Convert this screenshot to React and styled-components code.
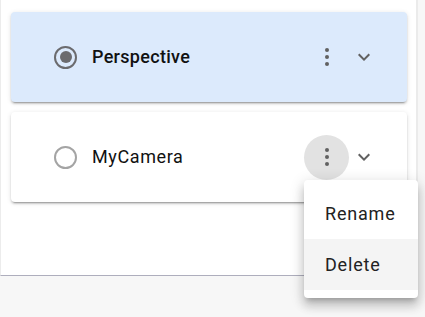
import React from 'react';
import styled, { createGlobalStyle } from 'styled-components';

const GlobalStyle = createGlobalStyle`
  html, body {
    margin: 0;
    padding: 0;
    background: #f7f7f7;
    font-family: Roboto, "Liberation Sans", sans-serif;
  }
`;

const Page = styled.div`
  position: relative;
  min-height: 100vh;
  background: #f7f7f7;
`;

const Panel = styled.div`
  box-sizing: border-box;
  width: 418px;
  height: 276px;
  background: #fff;
  border-left: 1px solid #ececec;
  border-right: 2px solid #ebebeb;
  border-bottom: 1px solid #aeaebd;
  padding: 12px 9px 0 10px;
  display: flex;
  flex-direction: column;
  gap: 10px;
`;

const Card = styled.div`
  height: 90px;
  border-radius: 4px;
  background: ${p => (p.$selected ? '#dceafc' : '#fff')};
  box-shadow: 0px 3px 1px -2px rgba(0, 0, 0, 0.2), 0px 2px 2px 0px rgba(0, 0, 0, 0.14),
    0px 1px 5px 0px rgba(0, 0, 0, 0.12);
  display: flex;
  align-items: center;
  padding: 0 31px 0 43px;
`;

const Radio = styled.span`
  box-sizing: border-box;
  width: 23px;
  height: 23px;
  border-radius: 50%;
  border: 2px solid ${p => (p.$checked ? '#6b6b6e' : '#a4a4a4')};
  display: flex;
  align-items: center;
  justify-content: center;
  flex-shrink: 0;

  &::after {
    content: '';
    display: ${p => (p.$checked ? 'block' : 'none')};
    width: 12px;
    height: 12px;
    border-radius: 50%;
    background: #6b6b6e;
  }
`;

const Label = styled.span`
  margin-left: 15px;
  margin-top: -1px;
  flex: 1;
  font-size: 18px;
  font-weight: ${p => (p.$bold ? 500 : 400)};
  color: #111;
  letter-spacing: ${p => (p.$bold ? '0.3px' : '0.6px')};
`;

const MenuAnchor = styled.div`
  position: relative;
`;

const IconButton = styled.button`
  width: 45px;
  height: 45px;
  border: none;
  padding: 0;
  border-radius: 50%;
  background: ${p => (p.$active ? '#e2e2e2' : 'transparent')};
  display: flex;
  align-items: center;
  justify-content: center;
  color: #616161;
`;

const Chevron = styled.span`
  width: 24px;
  height: 24px;
  margin-left: 3px;
  display: flex;
  align-items: center;
  justify-content: center;
  color: #616161;
`;

const Menu = styled.div`
  position: absolute;
  top: 100%;
  left: 0;
  z-index: 2;
  width: 114px;
  padding: 8px 0;
  background: #fff;
  border-radius: 4px;
  box-shadow: 0px 5px 5px -3px rgba(0, 0, 0, 0.2), 0px 8px 10px 1px rgba(0, 0, 0, 0.14),
    0px 3px 14px 2px rgba(0, 0, 0, 0.12);
`;

const MenuItem = styled.div`
  height: 51px;
  display: flex;
  align-items: center;
  padding-left: 21px;
  font-size: 18px;
  color: #222;
  letter-spacing: 0.8px;
  background: ${p => (p.$hover ? '#f4f4f4' : 'transparent')};
`;

function Dots() {
  return (
    <svg width="4" height="18" viewBox="0 0 4 18">
      <circle cx="2" cy="2" r="2" fill="currentColor" />
      <circle cx="2" cy="9" r="2" fill="currentColor" />
      <circle cx="2" cy="16" r="2" fill="currentColor" />
    </svg>
  );
}

function ChevronDown() {
  return (
    <svg width="24" height="24" viewBox="0 0 24 24">
      <path d="M7.41 8.59 12 13.17l4.59-4.58L18 10l-6 6-6-6z" fill="currentColor" />
    </svg>
  );
}

function CameraRow({ name, selected, menuOpen }) {
  return (
    <Card $selected={selected}>
      <Radio $checked={selected} />
      <Label $bold={selected}>{name}</Label>
      <MenuAnchor>
        <IconButton $active={menuOpen}>
          <Dots />
        </IconButton>
        {menuOpen && (
          <Menu>
            <MenuItem>Rename</MenuItem>
            <MenuItem $hover>Delete</MenuItem>
          </Menu>
        )}
      </MenuAnchor>
      <Chevron>
        <ChevronDown />
      </Chevron>
    </Card>
  );
}

export default function App() {
  return (
    <Page>
      <GlobalStyle />
      <Panel>
        <CameraRow name="Perspective" selected />
        <CameraRow name="MyCamera" menuOpen />
      </Panel>
    </Page>
  );
}
